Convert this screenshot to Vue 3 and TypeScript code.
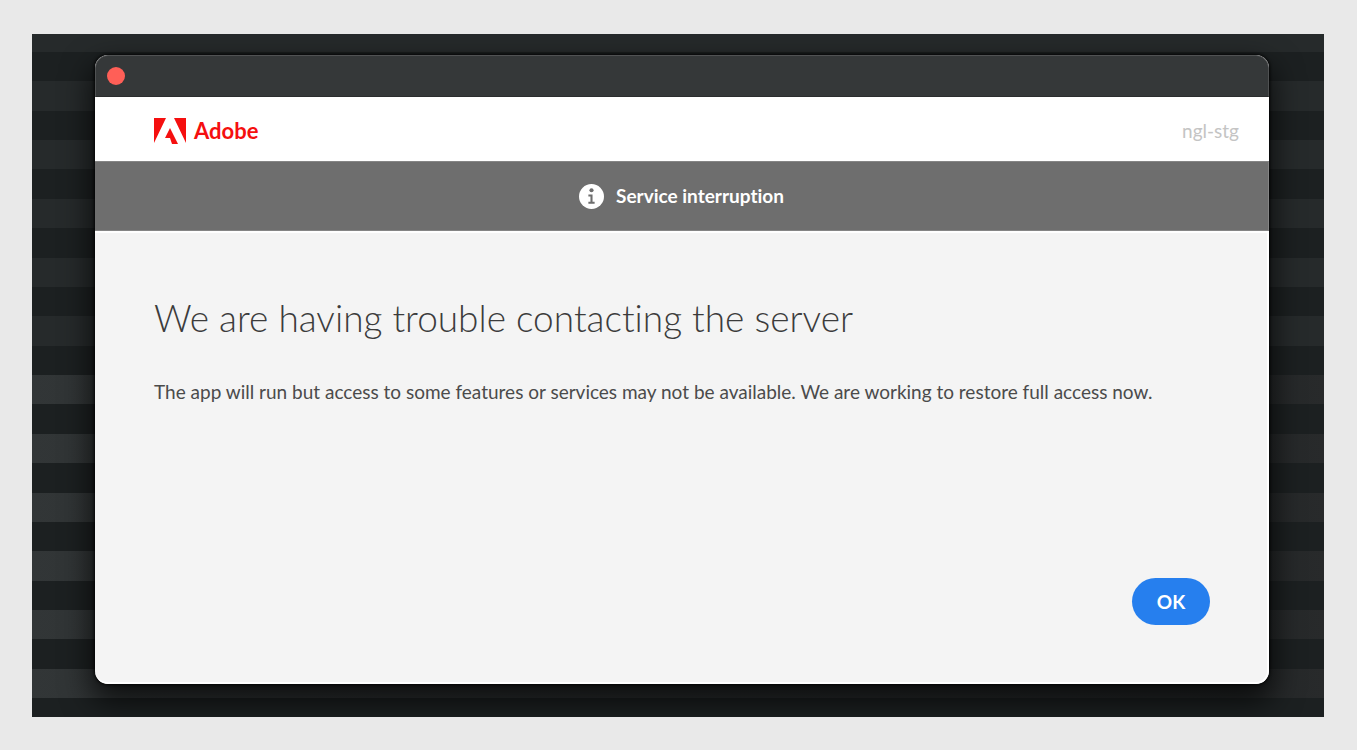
<script setup lang="ts">
interface Stripe {
  size: number
  light: boolean
  bright: boolean
}

const stripes: Stripe[] = Array.from({ length: 24 }, (_, i) => ({
  size: i === 0 ? 36 : i === 23 ? 38 : 59,
  light: i % 2 === 0,
  bright: i >= 12,
}))
</script>

<template>
  <main class="page">
    <div class="desktop">
      <div class="stripes" aria-hidden="true">
        <div
          v-for="(stripe, i) in stripes"
          :key="i"
          class="stripe"
          :class="{ light: stripe.light, bright: stripe.bright }"
          :style="{ flexGrow: stripe.size }"
        ></div>
      </div>

      <section class="window" role="dialog" aria-labelledby="title" aria-describedby="message">
        <div class="titlebar">
          <button class="close" type="button" aria-label="Close"></button>
        </div>

        <header class="brandbar">
          <div class="brand">
            <svg class="logo" viewBox="0 0 32 26" aria-hidden="true">
              <path d="M0 0H12L0 25ZM20 0H32V25ZM16 10L24 26H18L16 20H11Z" />
            </svg>
            <span>Adobe</span>
          </div>
          <span class="env">ngl-stg</span>
        </header>

        <div class="notice">
          <svg class="info" viewBox="0 0 24 24" aria-hidden="true">
            <circle cx="12" cy="12" r="12" fill="#fff" />
            <circle cx="12" cy="6" r="2" fill="#6e6e6e" />
            <path d="M9 10H13V17H15V19H9V17H11V12H9Z" fill="#6e6e6e" />
          </svg>
          <span>Service interruption</span>
        </div>

        <div class="content">
          <h1 id="title">We are having trouble contacting the server</h1>
          <p id="message">
            The app will run but access to some features or services may not be available. We are
            working to restore full access now.
          </p>
          <div class="actions">
            <button class="ok" type="button">OK</button>
          </div>
        </div>
      </section>
    </div>
  </main>
</template>

<style>
body {
  margin: 0;
  background: #e9e9e9;
}
</style>

<style scoped>
.page {
  box-sizing: border-box;
  display: flex;
  min-height: 100vh;
  padding: 34px 33px 33px 32px;
  background: #e9e9e9;
  font-family: Lato, "Noto Sans", sans-serif;
  font-variant-ligatures: none;
}

.desktop {
  position: relative;
  box-sizing: border-box;
  display: flex;
  flex: 1;
  min-width: 0;
  padding: 21px 55px 33px 63px;
  background: #1c2021;
  overflow: hidden;
}

.stripes {
  position: absolute;
  inset: 0;
  display: flex;
  flex-direction: column;
}

.stripe {
  flex: 1 1 0;
}

.stripe.light {
  background: #262a2b;
}

.stripe.light.bright {
  background: linear-gradient(90deg, #323637, #303435 5%, #252829 95%, #282a2b);
}

.window {
  position: relative;
  display: flex;
  flex: 1;
  flex-direction: column;
  min-width: 0;
  border-radius: 13px;
  background: #f4f4f4;
  box-shadow:
    0 0 3px 1px rgba(0, 0, 0, 0.8),
    0 14px 30px 4px rgba(0, 0, 0, 0.7);
  overflow: hidden;
}

.titlebar {
  box-sizing: border-box;
  display: flex;
  align-items: center;
  height: 42px;
  padding: 0 11px;
  border: 1px solid #505253;
  border-bottom-color: #2b2d2e;
  border-radius: 13px 13px 0 0;
  background: #353839;
}

.close {
  width: 18px;
  height: 18px;
  padding: 0;
  border: 0;
  border-radius: 50%;
  background: #ff5f57;
}

.brandbar {
  box-sizing: border-box;
  display: flex;
  align-items: center;
  justify-content: space-between;
  height: 64px;
  padding: 4px 30px 0 59px;
  background: #fff;
}

.brand {
  display: flex;
  align-items: center;
  gap: 8px;
  color: #f50f0f;
  font-size: 22px;
  font-weight: 700;
  line-height: 28px;
}

.logo {
  width: 32px;
  height: 26px;
  fill: #f50f0f;
}

.env {
  color: #c4c4c4;
  font-size: 19px;
  line-height: 28px;
}

.notice {
  box-sizing: border-box;
  display: flex;
  align-items: center;
  justify-content: center;
  gap: 12px;
  height: 70px;
  border: 1px solid #858585;
  border-width: 1px 1px 1px 0;
  background: #6e6e6e;
  color: #fff;
  font-size: 19px;
  font-weight: 700;
  line-height: 28px;
}

.info {
  width: 25px;
  height: 25px;
}

.content {
  display: flex;
  flex: 1;
  flex-direction: column;
  padding: 61px 57px 57px 59px;
  border: 2px solid #fff;
  border-width: 2px 2px 2px 0;
  border-radius: 0 0 13px 13px;
}

h1 {
  margin: 0;
  color: #3c3c3c;
  font-size: 37px;
  font-weight: 300;
  line-height: 48px;
}

p {
  margin: 36px 0 0;
  color: #4b4b4b;
  font-size: 19px;
  line-height: 28px;
}

.actions {
  display: flex;
  justify-content: flex-end;
  margin-top: auto;
}

.ok {
  width: 78px;
  height: 47px;
  padding: 0;
  border: 0;
  border-radius: 24px;
  background: #267fee;
  color: #fff;
  font-family: inherit;
  font-size: 19px;
  font-weight: 700;
}
</style>
